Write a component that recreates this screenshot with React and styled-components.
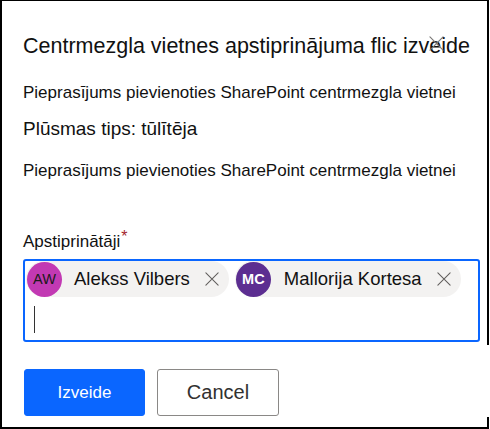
import React from "react";
import styled, { createGlobalStyle } from "styled-components";

const Global = createGlobalStyle`
  html, body { margin: 0; padding: 0; background: #fff; }
  body { font-family: "Liberation Sans", Arial, sans-serif; color: #111; }
  * { box-sizing: border-box; }
`;

const Frame = styled.div`
  position: relative;
  width: 489px;
  height: 429px;
  border-top: 1px solid #000;
  border-left: 2px solid #000;
  border-right: 2px solid #000;
  border-bottom: 2px solid #000;
  padding: 31px 0 0 21px;
  display: flex;
  flex-direction: column;
  &::after {
    content: "";
    position: absolute;
    right: -2px;
    top: 344px;
    width: 2px;
    height: 72px;
    background: #fff;
  }
`;

const Title = styled.h1`
  margin: 0;
  font-size: 21.5px;
  line-height: 28px;
  font-weight: 400;
  white-space: nowrap;
`;

const CloseButton = styled.span`
  position: absolute;
  left: 425px;
  top: 33px;
  width: 18px;
  height: 18px;
  display: flex;
  align-items: center;
  justify-content: center;
`;

const Text = styled.p`
  margin: ${(p) => p.$mt}px 0 0;
  font-size: ${(p) => p.$size}px;
  line-height: ${(p) => p.$lh}px;
  white-space: nowrap;
`;

const Label = styled.label`
  margin-top: 49px;
  font-size: 17px;
  line-height: 22px;
  display: flex;
  align-items: flex-start;
`;

const Required = styled.span`
  color: #a4262c;
  font-size: 16px;
  line-height: 12px;
  margin-left: 1px;
  margin-top: 0px;
`;

const PickerBox = styled.div`
  margin-top: 6px;
  width: 457px;
  height: 83px;
  border: 2px solid #0a66ff;
  border-radius: 3px;
  padding: 0 0 0 1px;
  display: flex;
  flex-direction: column;
`;

const ChipRow = styled.div`
  display: flex;
  gap: 6px;
`;

const Chip = styled.div`
  display: flex;
  align-items: center;
  height: 36px;
  background: #f3f2f1;
  border-radius: 18px;
  padding: 0 10px 0 1px;
`;

const Avatar = styled.span`
  width: 35px;
  height: 35px;
  border-radius: 50%;
  background: ${(p) => p.$bg};
  color: ${(p) => p.$fg};
  font-weight: ${(p) => p.$weight};
  font-size: 14.5px;
  display: flex;
  align-items: center;
  justify-content: center;
  flex-shrink: 0;
`;

const ChipName = styled.span`
  font-size: 18.5px;
  margin-left: ${(p) => p.$ml}px;
  margin-right: 15px;
  white-space: nowrap;
`;

const InputLine = styled.div`
  margin: 9px 0 0 8px;
  width: 1px;
  height: 27px;
  background: #333;
`;

const Actions = styled.div`
  margin-top: 27px;
  margin-left: 1px;
  display: flex;
  gap: 12px;
`;

const Button = styled.button`
  width: ${(p) => p.$w}px;
  height: 47px;
  border-radius: 3px;
  font-family: "Liberation Sans", Arial, sans-serif;
  font-size: ${(p) => p.$size}px;
  cursor: pointer;
  border: 1px solid ${(p) => (p.$primary ? "#0a66ff" : "#8a8886")};
  background: ${(p) => (p.$primary ? "#0a66ff" : "#fff")};
  color: ${(p) => (p.$primary ? "#fff" : "#323130")};
  padding: 0;
`;

const XIcon = ({ size, color, stroke = 1.3 }) => (
  <svg width={size} height={size} viewBox="0 0 16 16" fill="none">
    <path d="M1 1 L15 15 M15 1 L1 15" stroke={color} strokeWidth={stroke} strokeLinecap="round" />
  </svg>
);

const people = [
  { initials: "AW", name: "Alekss Vilbers", bg: "#c239b3", fg: "#1b1a19", weight: 400, ml: 12 },
  { initials: "MC", name: "Mallorija Kortesa", bg: "#5c2e91", fg: "#fff", weight: 700, ml: 13 },
];

export default function App() {
  return (
    <>
      <Global />
      <Frame>
        <Title>Centrmezgla vietnes apstiprinājuma flic izveide</Title>
        <CloseButton>
          <XIcon size={15} color="#7a7876" stroke={1.2} />
        </CloseButton>
        <Text $mt={22} $size={17} $lh={22}>Pieprasījums pievienoties SharePoint centrmezgla vietnei</Text>
        <Text $mt={13} $size={19} $lh={24}>Plūsmas tips: tūlītēja</Text>
        <Text $mt={19} $size={17} $lh={22}>Pieprasījums pievienoties SharePoint centrmezgla vietnei</Text>
        <Label>
          Apstiprinātāji<Required>*</Required>
        </Label>
        <PickerBox>
          <ChipRow>
            {people.map((p) => (
              <Chip key={p.initials}>
                <Avatar $bg={p.bg} $fg={p.fg} $weight={p.weight}>{p.initials}</Avatar>
                <ChipName $ml={p.ml}>{p.name}</ChipName>
                <XIcon size={14} color="#605e5c" stroke={1.2} />
              </Chip>
            ))}
          </ChipRow>
          <InputLine />
        </PickerBox>
        <Actions>
          <Button $primary $w={121} $size={17}>Izveide</Button>
          <Button $w={122} $size={20}>Cancel</Button>
        </Actions>
      </Frame>
    </>
  );
}
